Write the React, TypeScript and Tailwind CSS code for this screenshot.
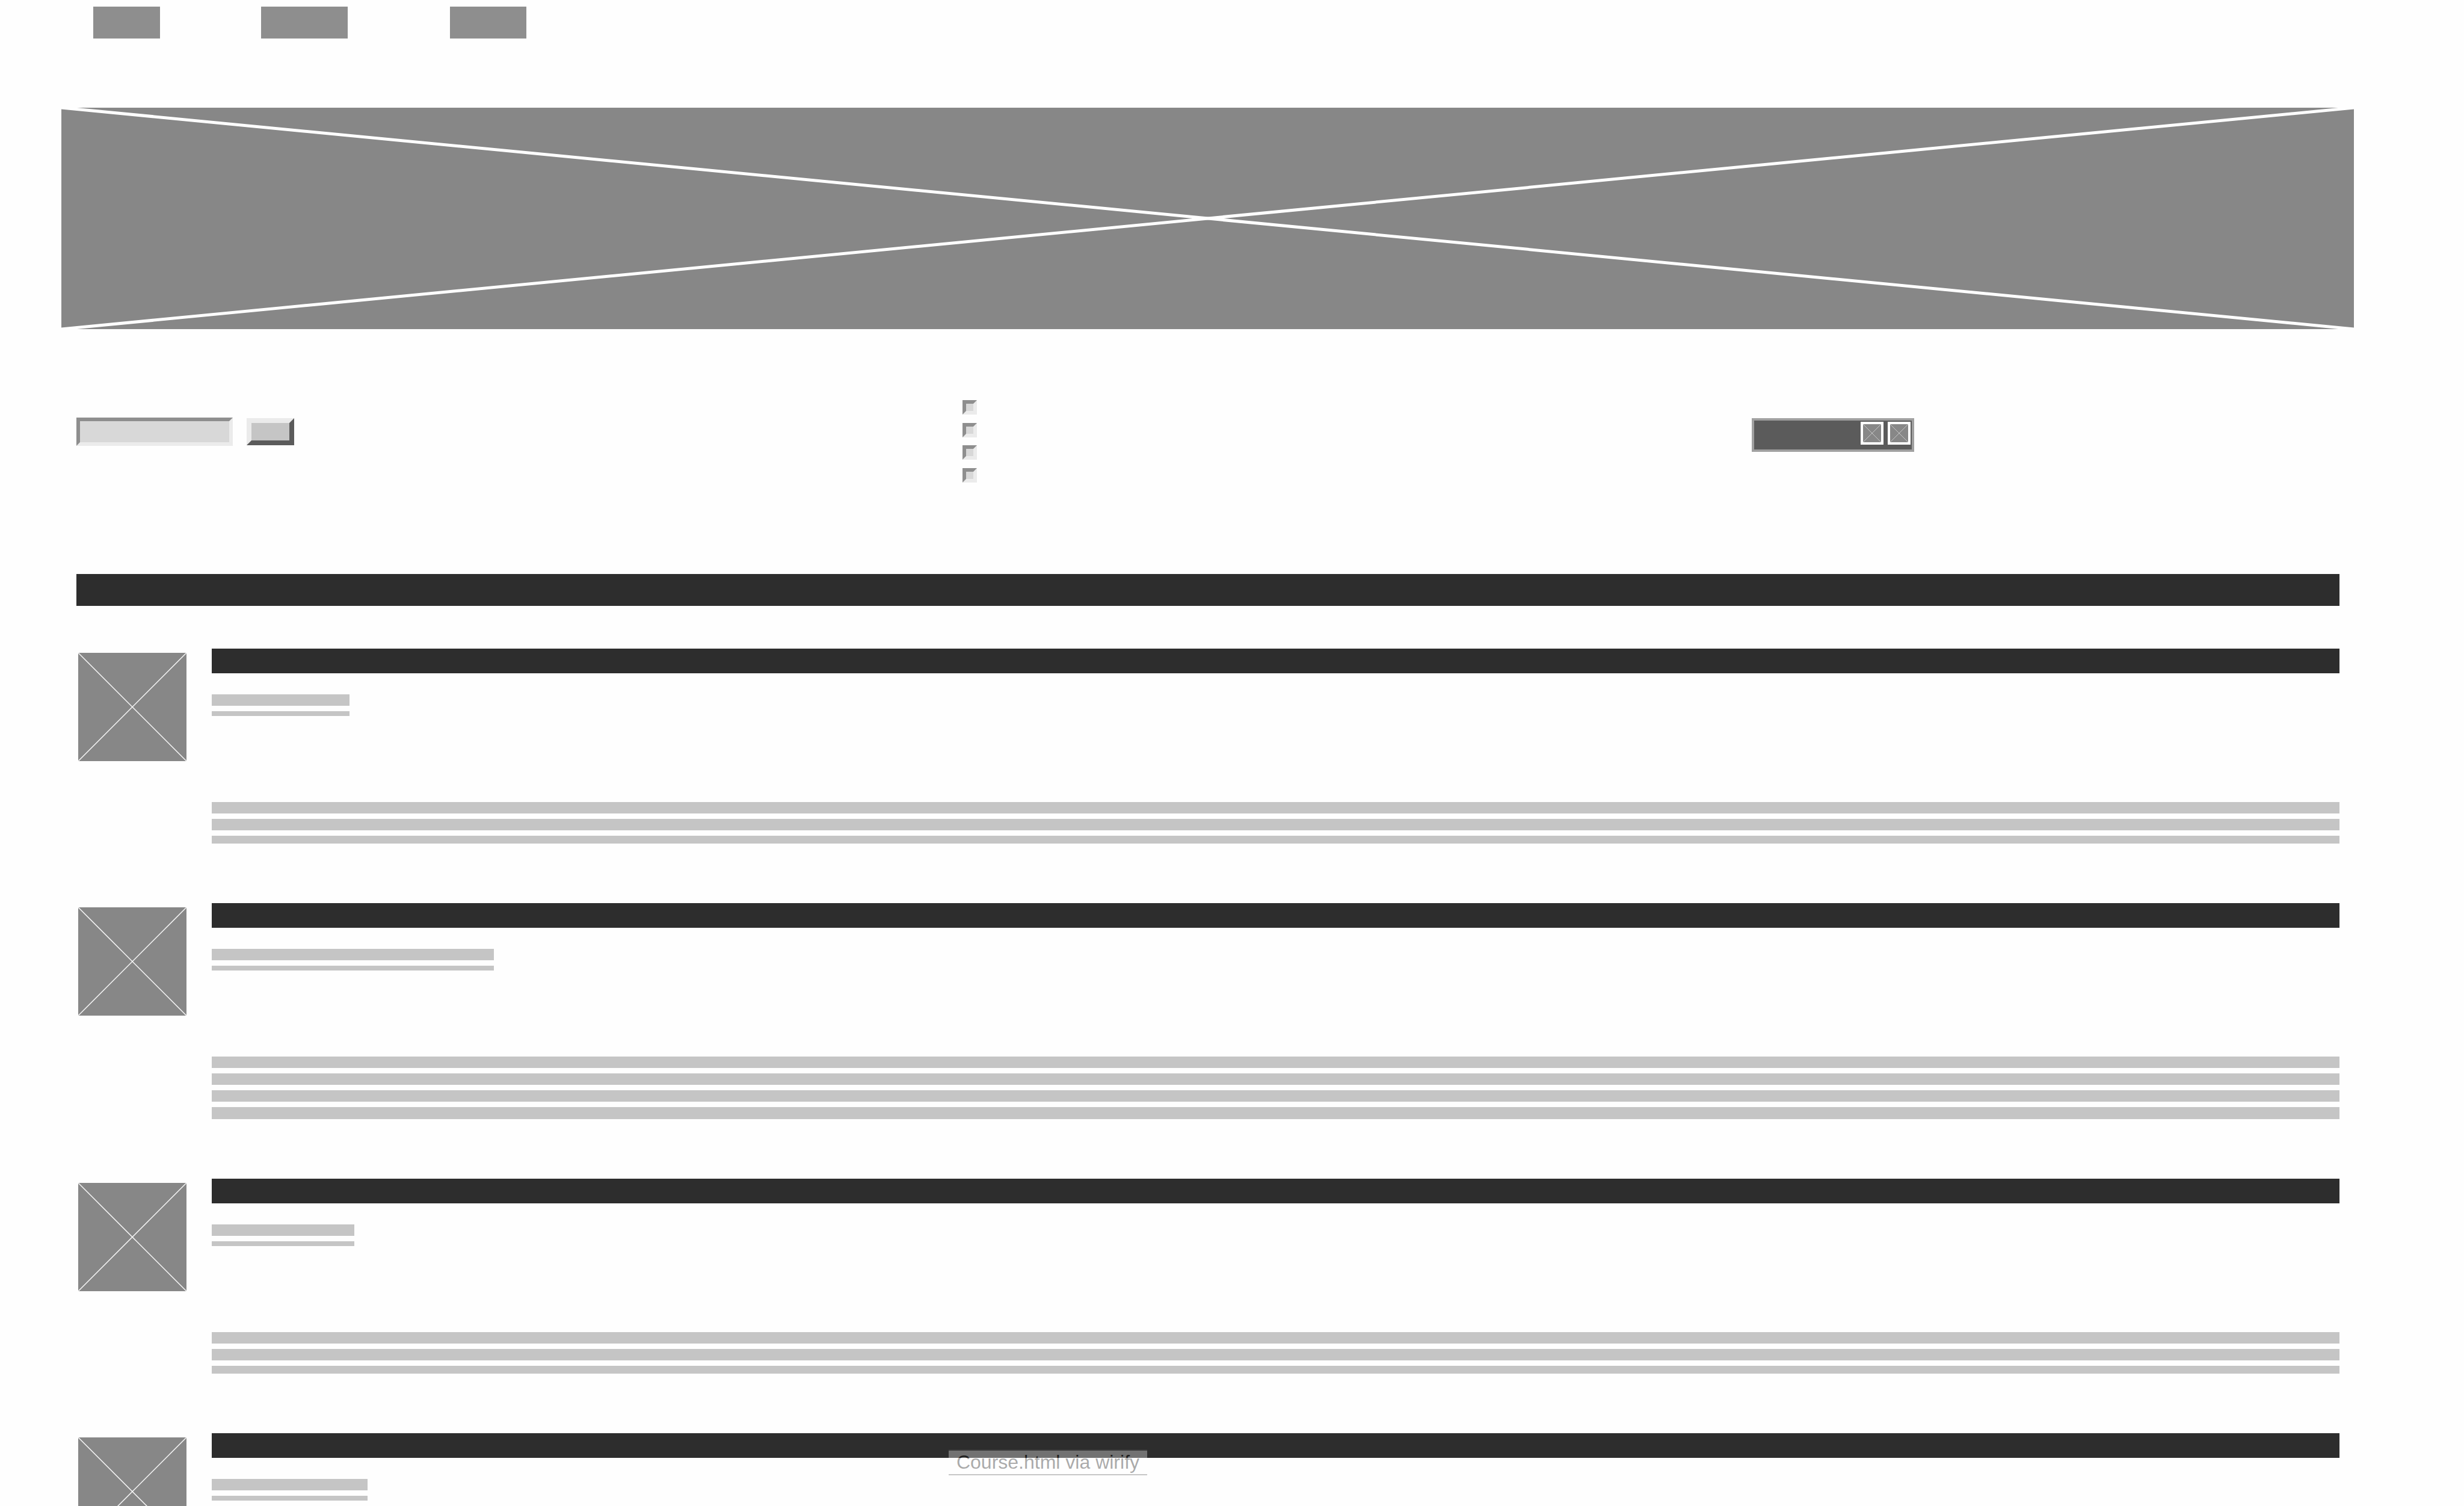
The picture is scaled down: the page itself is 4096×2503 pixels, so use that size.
import React from "react";

function Cross({ className }: { className: string }) {
  return (
    <svg
      className={className}
      viewBox="0 0 100 100"
      preserveAspectRatio="none"
      fill="none"
      stroke="currentColor"
      aria-hidden="true"
    >
      <path d="M0 0 L100 100" vectorEffect="non-scaling-stroke" />
      <path d="M0 100 L100 0" vectorEffect="non-scaling-stroke" />
    </svg>
  );
}

function SearchForm() {
  return (
    <form className="flex h-[47px] items-center gap-[23px]" onSubmit={(e) => e.preventDefault()}>
      <input
        type="text"
        aria-label="Search courses"
        className="h-[47px] w-[260px] rounded-none border-6 border-t-[#8e8e8e] border-r-[#ebebeb] border-b-[#ebebeb] border-l-[#8e8e8e] bg-[#d8d8d8] outline-none"
      />
      <button
        type="submit"
        aria-label="Search"
        className="h-[45px] w-[79px] border-8 border-t-[#ebebeb] border-r-[#5b5b5b] border-b-[#5b5b5b] border-l-[#ebebeb] bg-[#c5c5c5]"
      />
    </form>
  );
}

const filters = ["Filter one", "Filter two", "Filter three", "Filter four"];

function Filters() {
  return (
    <fieldset className="flex h-[137px] flex-col justify-between">
      {filters.map((name) => (
        <input
          key={name}
          type="checkbox"
          aria-label={name}
          className="size-6 appearance-none border-6 border-t-[#8e8e8e] border-r-[#ebebeb] border-b-[#ebebeb] border-l-[#8e8e8e] bg-[#d8d8d8]"
        />
      ))}
    </fieldset>
  );
}

function Pager() {
  return (
    <div className="flex h-14 w-[270px] justify-end gap-[7px] border-4 border-[#a0a0a0] bg-[#5b5b5b] pt-0.5 pr-0.5">
      {["Previous", "Next"].map((name) => (
        <button key={name} type="button" aria-label={name} className="size-[38px] border-4 border-white bg-[#878787]">
          <Cross className="block size-full stroke-1 text-[#c4c4c4]" />
        </button>
      ))}
    </div>
  );
}

type LineProps = { last: string; count: number };

function Lines({ count, last }: LineProps) {
  return (
    <div className="flex flex-col gap-[9px]">
      {Array.from({ length: count - 1 }, (_, i) => (
        <div key={i} className="h-[19px] bg-[#c5c5c5]" />
      ))}
      <div className={`bg-[#c5c5c5] ${last}`} />
    </div>
  );
}

const courses = [
  { meta: "w-[229px]", count: 3, last: "h-[13px]" },
  { meta: "w-[469px]", count: 4, last: "h-5" },
  { meta: "w-[237px]", count: 3, last: "h-[13px]" },
  { meta: "w-[259px]", count: 3, last: "h-[13px]" },
];

export default function App() {
  return (
    <div className="relative h-screen overflow-hidden bg-[#fefefe] font-['Liberation_Sans',Arial,sans-serif]">
      <nav className="flex pt-[11px] pl-[155px]" aria-label="Main">
        <a href="#home" aria-label="Home" className="h-[53px] w-[111px] bg-[#8e8e8e]" />
        <a href="#courses" aria-label="Courses" className="ml-[168px] h-[53px] w-36 bg-[#8e8e8e]" />
        <a href="#about" aria-label="About" className="ml-[170px] h-[53px] w-[127px] bg-[#8e8e8e]" />
      </nav>

      <div className="mt-[115px] mr-[183px] ml-[102px] h-[368px] bg-[#878787]">
        <Cross className="block size-full stroke-5 text-white" />
      </div>

      <main className="mr-[207px] ml-[127px]">
        <section className="mt-[118px] grid grid-cols-[1473fr_1312fr_977fr]">
          <div className="pt-[29px]">
            <SearchForm />
          </div>
          <Filters />
          <div className="pt-[30px]">
            <Pager />
          </div>
        </section>

        <div className="mt-[152px] h-[53px] bg-[#2d2d2d]" />

        <div className="mt-[71px] flex flex-col gap-[99px]">
          {courses.map((course, i) => (
            <article key={i} className="flex">
              <div className="mt-[7px] mr-[42px] ml-[3px] size-[180px] shrink-0 overflow-hidden rounded-xs bg-[#878787]">
                <Cross className="block size-full stroke-[1.5] text-[#f8f8f8]" />
              </div>
              <div className="min-w-0 flex-1">
                <div className="h-[41px] bg-[#2d2d2d]" />
                <div className={`mt-[35px] ${course.meta}`}>
                  <Lines count={2} last="h-2" />
                </div>
                <div className="mt-[143px]">
                  <Lines count={course.count} last={course.last} />
                </div>
              </div>
            </article>
          ))}
        </div>
      </main>

      <a
        href="#source"
        className="fixed bottom-[51px] left-[38.5%] border-y-2 border-[#555555] bg-white px-[13px] text-[32px] leading-[39px] whitespace-nowrap text-black opacity-33"
      >
        Course.html via wirify
      </a>
    </div>
  );
}
